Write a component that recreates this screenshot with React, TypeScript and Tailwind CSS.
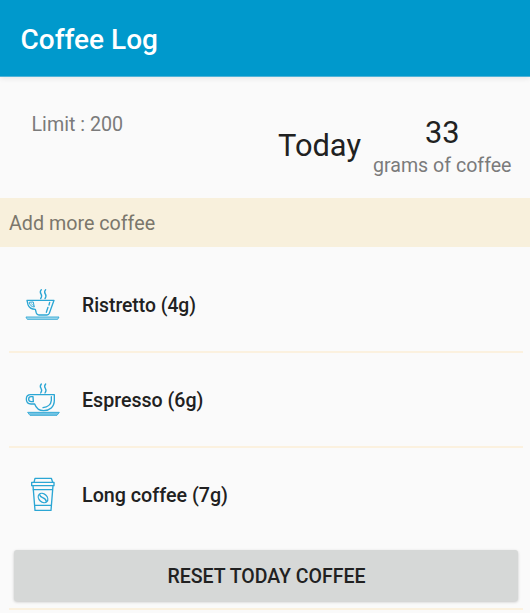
import type { ReactNode } from "react";

function Steam({ y }: { y: number }) {
  return (
    <g transform={`translate(0 ${y})`}>
      <path d="M79 0c-5 6-4 9-1 13s3 8-1 14" />
      <path d="M92 0c-5 6-4 9-1 13s3 8-1 14" />
    </g>
  );
}

function Icon({ children }: { children: ReactNode }) {
  return (
    <svg
      className="h-[50px] w-[60px] shrink-0"
      viewBox="0 0 180 150"
      fill="none"
      stroke="#2ba6d4"
      strokeWidth="4"
      strokeLinejoin="round"
      strokeLinecap="round"
    >
      {children}
    </svg>
  );
}

function RistrettoIcon() {
  return (
    <Icon>
      <Steam y={29} />
      <path d="M36 61H117L103 100Q101 105 96 105H72Q66 105 64 99L61 88Q44 87 39 74Z" />
      <path d="M43 68Q45 80 58 81L55 67Z" strokeWidth="3" />
      <path d="M49 71L56 77" strokeWidth="2" />
      <path d="M104 67L102 75M99 82L94 97" />
      <path d="M34 111H132L128 118H38Z" fill="#a5daee" strokeWidth="2.6" />
    </Icon>
  );
}

function EspressoIcon() {
  return (
    <Icon>
      <Steam y={27} />
      <path d="M55 59H118V76C118 96 104 107 86 107C73 107 64 101 59 87H48C38 87 34 80 34 72C34 64 39 59 47 59Z" />
      <path d="M54 65H48C43 65 41 68 41 73C41 78 44 80 49 80H55Z" />
      <path d="M109 65V76C108 88 98 97 84 98" />
      <path d="M39 112H133L126 121H46Z" fill="#73c4e3" strokeWidth="2.6" />
    </Icon>
  );
}

function LongCoffeeIcon() {
  return (
    <Icon>
      <path d="M57 37L60 25H109L113 37" />
      <path d="M50 37H117V47H50Z" />
      <path d="M54 47L60 121H108L114 47" />
      <path d="M55 59H112M59 106H109" />
      <ellipse cx="84" cy="84" rx="16" ry="12" transform="rotate(43 84 84)" />
      <path d="M74 74C75 86 92 80 94 95" />
    </Icon>
  );
}

const drinks = [
  { label: "Ristretto (4g)", icon: <RistrettoIcon />, text: "text-[19.3px]" },
  { label: "Espresso (6g)", icon: <EspressoIcon />, text: "text-[19.6px]" },
  { label: "Long coffee (7g)", icon: <LongCoffeeIcon />, text: "text-[19.7px]" },
];

export default function App() {
  return (
    <div className="flex h-[613px] w-[530px] flex-col overflow-hidden bg-[#fafafa] font-['Roboto',sans-serif] text-[#212121]">
      <header className="z-10 flex h-[77px] shrink-0 items-center border-b border-[#4fb3d8] bg-[#0099cc] pt-1 pl-[20.5px] shadow-[0_2px_5px_rgba(0,0,0,0.07)]">
        <h1 className="text-[28px] leading-8 font-medium text-white">Coffee Log</h1>
      </header>

      <section className="flex h-[121px] shrink-0 items-start justify-between pr-[18.5px] pl-[31.5px]">
        <p className="mt-[35px] text-[19.7px] leading-[26px] text-[#7b7b7b]">Limit : 200</p>
        <div className="flex items-center gap-3 pt-[38px]">
          <p className="-mt-1 text-[30.8px] leading-9">Today</p>
          <div className="flex flex-col items-center">
            <p className="text-[30.8px] leading-9">33</p>
            <p className="text-[19.6px] leading-[29px] text-[#7b7b7b]">grams of coffee</p>
          </div>
        </div>
      </section>

      <h2 className="flex h-[49px] shrink-0 items-center bg-[#f8f0dc] pt-[3px] pl-[9px] text-[19.7px] leading-6 text-[#7b776c]">
        Add more coffee
      </h2>

      <ul className="h-[302px] shrink-0 px-[9px] pt-[11px]">
        {drinks.map(({ label, icon, text }) => (
          <li
            key={label}
            className="mr-[-2px] flex h-[95px] items-center gap-[7px] border-b-2 border-[#fbf1df] pl-1.5 last:border-transparent"
          >
            {icon}
            <span className={`${text} pt-[3px] leading-6 font-medium`}>{label}</span>
          </li>
        ))}
      </ul>

      <div className="flex shrink-0 flex-col">
        <button className="mt-px mr-3 ml-[14px] h-[51px] shrink-0 rounded-[3px] bg-[#d6d8d7] pt-[3px] pl-px text-[19.5px] leading-6 font-medium shadow-[0_1px_3px_rgba(0,0,0,0.22)]">
          RESET TODAY COFFEE
        </button>
        <hr className="mt-[7px] mr-[7px] ml-[9px] border-0 border-t-2 border-[#fbf1df]" />
      </div>
    </div>
  );
}
